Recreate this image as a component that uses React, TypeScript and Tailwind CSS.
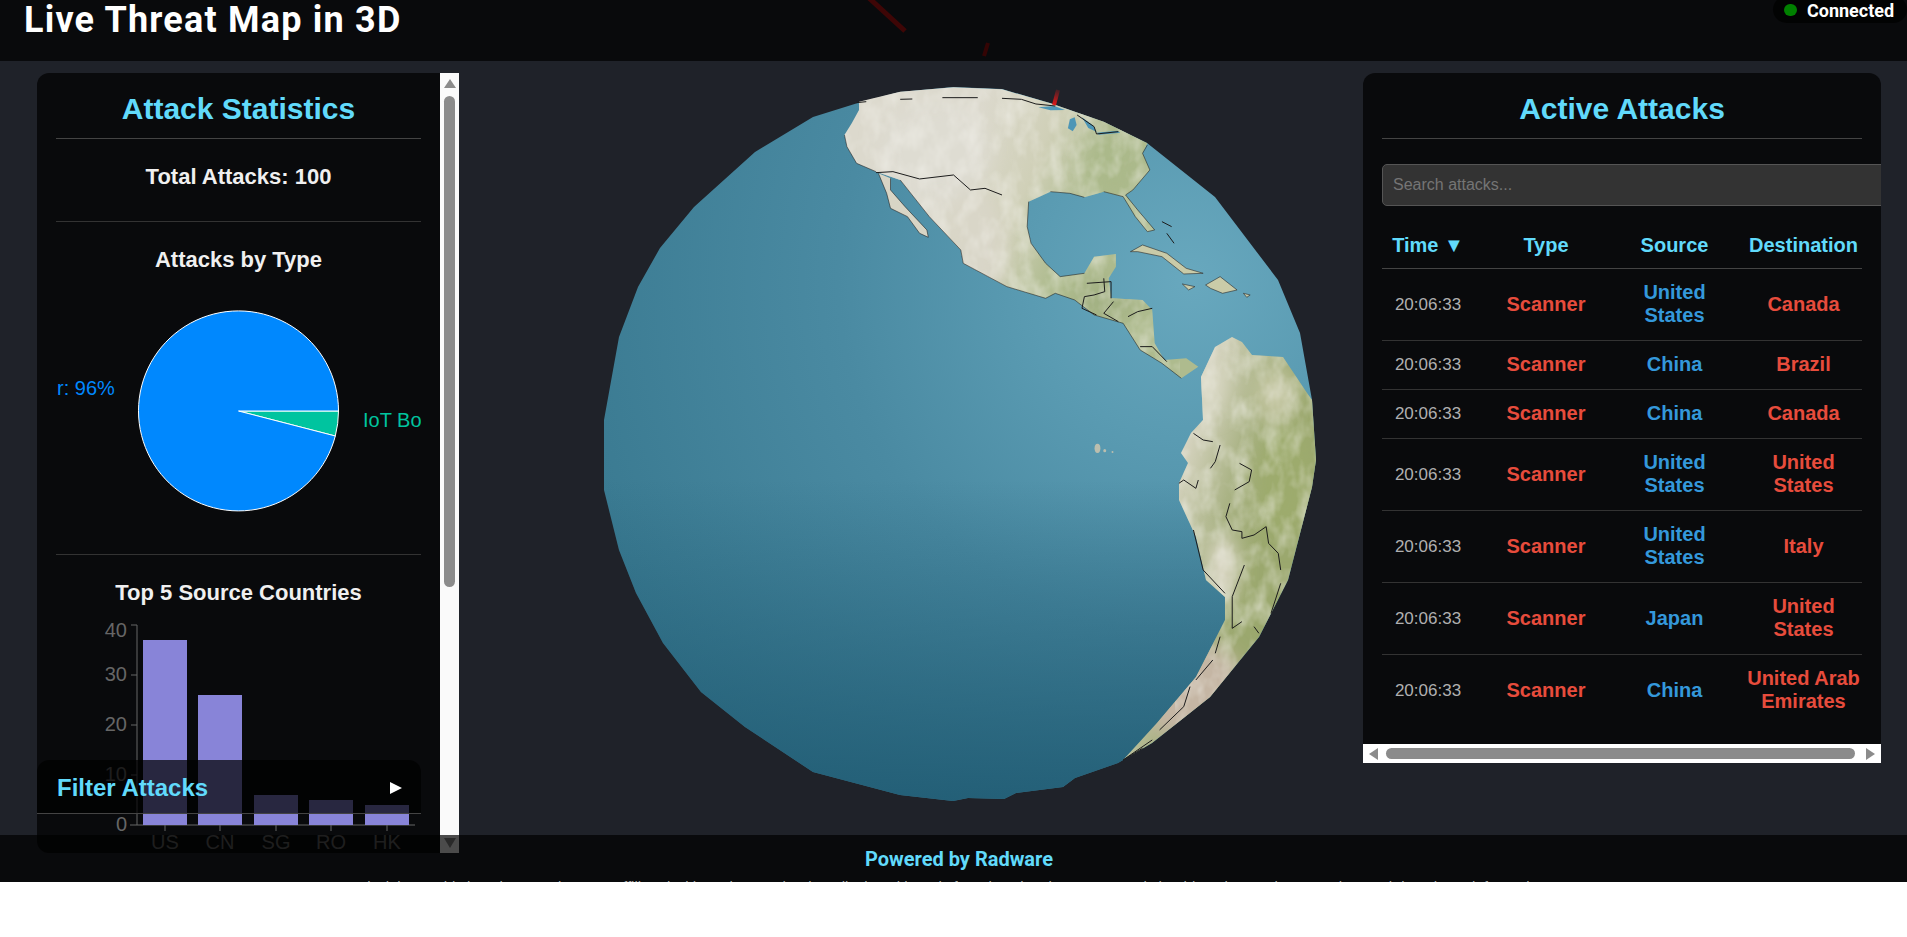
import React from 'react';

const sans = 'font-["Liberation_Sans",Arial,sans-serif]';

const rows = [
  { source: 'United States', dest: 'Canada', h: 'h-[72px]' },
  { source: 'China', dest: 'Brazil', h: 'h-[49px]' },
  { source: 'China', dest: 'Canada', h: 'h-[49px]' },
  { source: 'United States', dest: 'United States', h: 'h-[72px]' },
  { source: 'United States', dest: 'Italy', h: 'h-[72px]' },
  { source: 'Japan', dest: 'United States', h: 'h-[72px]' },
  { source: 'China', dest: 'United Arab Emirates', h: 'h-[72px]' },
];

const bars = [
  { label: 'US', x: 143, y: 640 },
  { label: 'CN', x: 198, y: 695 },
  { label: 'SG', x: 254, y: 795 },
  { label: 'RO', x: 309, y: 800 },
  { label: 'HK', x: 365, y: 805 },
];

// paths below are traced in crop pixels, the groups scale them back to page coordinates
const northAmerica =
  'M555 305 L640 275 L750 262 L850 268 L950 310 L1060 365 L1150 430 L1140 460 L1155 510 L1120 570 L1105 585 L1130 630 L1165 690 L1150 695 L1125 650 L1100 590 L1060 575 L1020 592 L990 580 L950 575 L905 605 L902 680 L910 730 L940 790 L970 830 L1020 820 L1040 770 L1085 762 L1085 800 L1070 835 L1075 895 L1140 900 L1160 930 L1165 1030 L1185 1080 L1230 1075 L1255 1100 L1220 1135 L1180 1090 L1135 1050 L1100 970 L1040 945 L1000 900 L960 880 L940 895 L860 860 L770 790 L765 750 L700 650 L640 540 L590 515 L550 490 L530 440 L525 405 L540 370 L555 330 Z';
const baja = 'M595 520 L620 535 L620 570 L650 620 L695 690 L698 712 L680 700 L655 650 L620 625 L612 580 Z';
const islands = [
  'M1115 755 L1140 735 L1190 760 L1230 805 L1265 820 L1225 822 L1180 770 L1130 755 Z',
  'M1270 855 L1300 830 L1335 870 L1305 880 L1280 865 Z',
  'M1222 852 L1248 860 L1235 870 Z',
  'M1348 880 L1362 885 L1355 892 Z',
];
const southAmerica =
  'M1203 420 L1201 377 L1215 347 L1232 337 L1242 342 L1252 355 L1283 357 L1307 393 L1312 400 L1316 460 L1312 487 L1288 580 L1259 637 L1210 697 L1152 743 L1123 760 L1157 723 L1196 677 L1225 620 L1225 597 L1206 580 L1196 537 L1179 500 L1179 483 L1188 463 L1181 453 L1191 433 Z';
const globe =
  'M604 420 L619 337 L638 287 L660 248 L694 207 L755 152 L813 117 L861 102 L900 92 L953 87 L1002 89 L1050 103 L1104 122 L1147 143 L1215 197 L1278 280 L1300 333 L1312 400 L1316 460 L1312 487 L1288 580 L1259 637 L1210 697 L1152 743 L1118 763 L1075 778 L1063 787 L1016 793 L1004 799 L968 798 L953 801 L900 795 L813 772 L745 727 L701 692 L663 643 L636 593 L619 550 L604 490 Z';

const zoomTop = 'translate(590 0) scale(0.4847 0.3333)';
const zoomBottom = 'translate(590 420) scale(0.4847 0.3333)';

const Globe = () => (
  <svg viewBox="459 61 904 770" className="w-[904px] h-[770px] -mt-[12px] overflow-visible shrink-0">
    <defs>
      <radialGradient id="ocean" gradientUnits="userSpaceOnUse" cx="1190" cy="280" r="640">
        <stop offset="0" stopColor="#68a8be" />
        <stop offset="0.25" stopColor="#5a9bb2" />
        <stop offset="0.55" stopColor="#4a8aa2" />
        <stop offset="1" stopColor="#3a7a91" />
      </radialGradient>
      <linearGradient id="oceanShade" gradientUnits="userSpaceOnUse" x1="0" y1="480" x2="0" y2="800">
        <stop offset="0" stopColor="#1f5a72" stopOpacity="0" />
        <stop offset="1" stopColor="#1f5a72" stopOpacity="0.85" />
      </linearGradient>
      <linearGradient id="landNorth" gradientUnits="userSpaceOnUse" x1="850" y1="150" x2="1130" y2="230">
        <stop offset="0" stopColor="#dcd9cd" />
        <stop offset="0.55" stopColor="#d0d0b8" />
        <stop offset="1" stopColor="#aebb8e" />
      </linearGradient>
      <linearGradient id="landSouth" gradientUnits="userSpaceOnUse" x1="1190" y1="420" x2="1290" y2="450">
        <stop offset="0" stopColor="#d8d5c3" />
        <stop offset="0.55" stopColor="#aab385" />
        <stop offset="1" stopColor="#9ba86e" />
      </linearGradient>
      <linearGradient id="arcFade" gradientUnits="userSpaceOnUse" x1="1058" y1="90" x2="1054" y2="105">
        <stop offset="0" stopColor="#e01818" stopOpacity="0.2" />
        <stop offset="1" stopColor="#e01818" />
      </linearGradient>
      <filter id="soft" x="-30%" y="-30%" width="160%" height="160%">
        <feGaussianBlur stdDeviation="10" />
      </filter>
      <filter id="mottle" x="0" y="0" width="100%" height="100%">
        <feTurbulence type="fractalNoise" baseFrequency="0.06 0.04" numOctaves="3" seed="4" />
        <feColorMatrix values="0 0 0 0 0.9  0 0 0 0 0.89  0 0 0 0 0.84  1 0 0 0 -0.38" />
      </filter>
      <clipPath id="southClip">
        <path d={southAmerica} />
      </clipPath>
      <clipPath id="northClip">
        <path d={northAmerica} transform={zoomTop} />
      </clipPath>
    </defs>

    <path d={globe} fill="url(#ocean)" />
    <path d={globe} fill="url(#oceanShade)" />
    {/* Galapagos */}
    <g transform={zoomBottom} fill="#d5c8ae" opacity="0.8">
      <ellipse cx="1047" cy="85" rx="6" ry="14" />
      <ellipse cx="1062" cy="92" rx="3" ry="5" />
      <ellipse cx="1078" cy="96" rx="2" ry="3" />
    </g>

    {/* Central America and Mexico */}
    <g transform={zoomTop}>
      <path d={northAmerica} fill="url(#landNorth)" />
      <path d={baja} fill="#d8d5c5" />
      {islands.map((d) => (
        <path key={d} d={d} fill="#c9cba8" stroke="#2a2a2a" strokeOpacity="0.6" strokeWidth="1" vectorEffect="non-scaling-stroke" />
      ))}
    </g>
    <g clipPath="url(#northClip)">
      <g filter="url(#soft)">
        <ellipse cx="935" cy="150" rx="55" ry="50" fill="#dedcd2" />
        <ellipse cx="975" cy="250" rx="30" ry="60" fill="#d9d6c8" />
        <ellipse cx="1105" cy="300" rx="30" ry="22" fill="#a3b183" />
        <ellipse cx="1115" cy="165" rx="30" ry="34" fill="#abb98a" />
      </g>
      <rect x="840" y="85" width="340" height="300" filter="url(#mottle)" />
    </g>
    <g transform={zoomTop} fill="#4d96b6">
      <path d="M925 322 L958 318 L980 330 L950 331 Z" />
      <path d="M990 358 L1000 352 L1004 375 L996 394 L986 385 Z" />
      <path d="M1015 352 L1036 374 L1046 396 L1028 384 Z" />
      <path d="M1045 398 L1088 392 L1094 398 L1050 404 Z" />
    </g>
    <g transform={zoomTop} fill="none" stroke="#1c1c1c" strokeWidth="1">
      {/* coast */}
      <path
        vectorEffect="non-scaling-stroke"
        strokeOpacity="0.55"
        d="M525 405 L530 440 L550 490 L590 515 M640 540 L700 650 L765 750 L770 790 L860 860 L940 895 L960 880 L1000 900 L1040 945 L1100 970 L1135 1050 L1180 1090 L1220 1135 M905 605 L902 680 L910 730 L940 790 L970 830 L1020 820 M950 575 L990 580 L1020 592 M1060 575 L1100 590 L1125 650 L1150 695 L1165 690 L1130 630 L1105 585 L1120 570 L1155 510 L1140 460 L1150 435 M595 520 L612 580 L620 625 L655 650 L680 700 L698 712 L695 690 L650 620 L620 570 L620 535"
      />
      {/* borders */}
      <path
        vectorEffect="non-scaling-stroke"
        d="M590 518 L625 515 L680 537 L750 525 L785 570 L815 565 L850 585 M550 308 L570 305 M640 298 L665 297 M727 293 L800 293 M850 295 L890 298 L920 312 L960 318 M1005 345 L1040 380 L1045 402 L1090 395 M1025 850 L1075 845 L1075 895 M1060 835 L1062 875 L1040 885 L1020 890 L1015 925 L1045 945 M1080 905 L1060 940 L1090 965 M1110 950 L1130 935 L1160 925 M1135 1040 L1160 1040 L1190 1085 M1180 665 L1200 680 M1190 700 L1205 730"
      />
    </g>

    {/* South America */}
    <path d={southAmerica} fill="url(#landSouth)" />
    <g clipPath="url(#southClip)">
      <g filter="url(#soft)">
        <ellipse cx="1210" cy="385" rx="14" ry="30" fill="#d9d8c4" />
        <ellipse cx="1275" cy="395" rx="20" ry="26" fill="#c4c6a2" />
        <ellipse cx="1222" cy="570" rx="14" ry="36" fill="#dfdacb" />
        <ellipse cx="1190" cy="690" rx="55" ry="50" fill="#c5b6a4" />
        <ellipse cx="1285" cy="480" rx="28" ry="60" fill="#9dab6d" />
      </g>
      <rect x="1175" y="335" width="145" height="430" filter="url(#mottle)" />
    </g>
    <g transform={zoomBottom} fill="none" stroke="#1c1c1c" strokeWidth="1">
      <path
        vectorEffect="non-scaling-stroke"
        d="M1245 40 L1265 60 L1285 65 M1300 75 L1290 125 L1280 145 M1340 130 L1365 150 L1360 185 L1330 210 M1320 250 L1312 290 L1325 330 L1345 335 L1345 355 L1370 345 L1395 320 L1400 370 L1420 400 L1425 450 M1215 190 L1225 180 L1250 205 L1255 180 M1245 330 L1265 450 L1310 520 M1350 435 L1325 530 L1325 625 L1345 605 M1300 650 L1290 700 M1285 720 L1250 780 M1238 800 L1225 860 L1175 930 M1160 960 L1100 1020 L1140 985 M1425 490 L1405 580 M1370 620 L1380 640"
      />
    </g>

    {/* arcs */}
    <path d="M869 -2 L905 31" stroke="#d01414" strokeWidth="5" />
    <path d="M988 43 L984 56" stroke="#b01010" strokeWidth="4" />
    <path d="M1058 90 L1054 105" stroke="url(#arcFade)" strokeWidth="4" />
  </svg>
);

const VScrollbar = () => (
  <div className="w-[19px] shrink-0 bg-[#fafafa] flex flex-col items-center">
    <div className="mt-[6px] w-0 h-0 border-x-[6.5px] border-x-transparent border-b-[9px] border-b-[#8b8b8b]" />
    <div className="mt-[8px] w-[11px] h-[491px] rounded-full bg-[#8b8b8b]" />
    <div className="mt-auto mb-[5px] w-0 h-0 border-x-[6.5px] border-x-transparent border-t-[10px] border-t-[#8b8b8b]" />
  </div>
);

const HScrollbar = () => (
  <div className="h-[19px] bg-white flex items-center shrink-0">
    <div className="ml-[6px] w-0 h-0 border-y-[6px] border-y-transparent border-r-[9px] border-r-[#8b8b8b]" />
    <div className="ml-[8px] w-[469px] h-[11px] rounded-full bg-[#8b8b8b]" />
    <div className="ml-[11px] w-0 h-0 border-y-[6px] border-y-transparent border-l-[9px] border-l-[#8b8b8b]" />
  </div>
);

const PieChart = () => (
  <svg width="365" height="260" viewBox="56 281 365 260" className="block">
    <path d="M238.5 411 L338.5 411 A100 100 0 0 1 335.3 436 Z" fill="#00c49f" stroke="#fff" />
    <path d="M238.5 411 L335.3 436 A100 100 0 1 1 338.5 411 Z" fill="#0088fe" stroke="#fff" />
    <text x="57" y="395" fill="#0088fe" fontSize="20">r: 96%</text>
    <text x="363" y="427" fill="#00c49f" fontSize="20">IoT Bo</text>
  </svg>
);

const BarChart = () => (
  <svg width="365" height="240" viewBox="56 615 365 240" className="block">
    <path d="M137 625 V825 M131 625 H137 M131 675 H137 M131 725 H137 M131 775 H137 M130 825 H415" stroke="#666" strokeWidth="1" fill="none" />
    {[40, 30, 20, 10, 0].map((v, i) => (
      <text key={v} x="127" y={i === 0 ? 637 : 631 + i * 50} fill="#666" fontSize="20" textAnchor="end">{v}</text>
    ))}
    {bars.map((b) => (
      <g key={b.label}>
        <rect x={b.x} y={b.y} width="44" height={825 - b.y} fill="#8884d8" />
        <path d={`M${b.x + 22} 825 V831`} stroke="#666" />
        <text x={b.x + 22} y="849" fill="#666" fontSize="20" textAnchor="middle">{b.label}</text>
      </g>
    ))}
  </svg>
);

const StatsPanel = () => (
  <div className="relative w-[422px] h-[780px] shrink-0 flex rounded-l-xl bg-black/70 overflow-hidden">
    <div className="w-[403px] shrink-0 px-[19px] overflow-hidden">
      <h2 className="h-[66px] border-b border-[#444] text-[30px] leading-[72px] font-bold text-[#61dafb] text-center">
        Attack Statistics
      </h2>
      <div className="h-[83px] border-b border-[#333] text-[22px] font-bold text-[#f0f0f0] text-center pt-[24px] leading-[28px]">
        Total Attacks: 100
      </div>
      <h3 className="mt-[23px] h-[36px] text-[22px] font-bold text-[#f0f0f0] text-center leading-[30px]">Attacks by Type</h3>
      <PieChart />
      <div className="h-[14px] border-b border-[#333]" />
      <h3 className="mt-[24px] h-[36px] text-[22px] font-bold text-[#f0f0f0] text-center leading-[28px]">Top 5 Source Countries</h3>
      <BarChart />
    </div>
    <VScrollbar />
    {/* Filter Attacks drawer, collapsed over the chart */}
    <div className="absolute left-0 bottom-[39px] w-[384px] h-[54px] rounded-t-xl bg-black/70 border-b border-[#444] flex items-center justify-between pl-[20px] pr-[19px]">
      <span className="text-[24px] leading-[30px] mt-[2px] font-bold text-[#61dafb]">Filter Attacks</span>
      <div className="mt-[2px] w-0 h-0 border-y-[6.5px] border-y-transparent border-l-[12px] border-l-white" />
    </div>
  </div>
);

const AttacksPanel = () => (
  <div className="w-[518px] h-[690px] shrink-0 rounded-t-xl bg-black/70 flex flex-col overflow-hidden">
    <div className="flex-1 pl-[19px] overflow-hidden">
      <h2 className="w-[480px] h-[66px] border-b border-[#444] text-[30px] leading-[72px] font-bold text-[#61dafb] text-center">
        Active Attacks
      </h2>
      <div className="mt-[25px] w-[520px] h-[42px] rounded-[5px] border border-[#555] bg-[#333] flex items-center pl-[10px] text-[16px] text-[#757575]">
        Search attacks...
      </div>
      <table className="mt-[16px] w-[480px] table-fixed border-collapse">
        <colgroup>
          <col className="w-[92px]" />
          <col className="w-[144px]" />
          <col className="w-[113px]" />
          <col className="w-[131px]" />
        </colgroup>
        <thead>
          <tr className="h-[46px] border-b border-[#444] text-[20px] font-bold text-[#61dafb]">
            <th>Time ▼</th>
            <th>Type</th>
            <th>Source</th>
            <th className="pl-[14px]">Destination</th>
          </tr>
        </thead>
        <tbody>
          {rows.map((r, i) => (
            <tr key={i} className={`${r.h} ${i < rows.length - 1 ? 'border-b border-[#333]' : ''} text-center leading-[23px]`}>
              <td className="text-[17px] text-[#b0b0b0]">20:06:33</td>
              <td className="text-[20px] font-bold text-[#e74c3c]">Scanner</td>
              <td className="px-[8px] text-[20px] font-bold text-[#3498db]">{r.source}</td>
              <td className="pl-[14px] text-[20px] font-bold text-[#e74c3c]">{r.dest}</td>
            </tr>
          ))}
        </tbody>
      </table>
    </div>
    <HScrollbar />
  </div>
);

export default function App() {
  return (
    <div className={`h-[937px] bg-white overflow-hidden ${sans}`}>
      <div className="relative h-[882px] bg-[#1f2229] overflow-hidden">
        <header className="relative z-10 h-[61px] bg-black/70 flex items-start justify-between pl-[24px] font-['Roboto',sans-serif]">
          <h1 className="text-[36px] leading-[40px] font-bold text-white tracking-[1.2px]">Live Threat Map in 3D</h1>
          <div className="w-[134px] h-[27px] -mt-[4px] rounded-[14px] bg-black/70 flex items-center pt-[1px] pl-[11px] gap-[10px]">
            <span className="w-[13px] h-[12px] rounded-full bg-[#008000]" />
            <span className="text-[18px] font-bold text-white">Connected</span>
          </div>
        </header>

        <main className="flex pt-[12px] pl-[37px]">
          <StatsPanel />
          <Globe />
          <AttacksPanel />
        </main>

        <footer className="absolute z-20 left-0 right-0 bottom-0 h-[47px] bg-black/70 text-center overflow-hidden">
          <p className="mt-[13px] pl-[11px] font-['Roboto',sans-serif] text-[20px] leading-[22px] font-bold text-[#61dafb]">Powered by Radware</p>
          <p className="mt-[8px] text-[15px] leading-[18px] text-[#aaa]">
            Disclaimer: This is a demo project, not affiliated with Radware. The data displayed here is for educational purposes and should not be used as complete real-time threat information.
          </p>
        </footer>
      </div>
    </div>
  );
}
